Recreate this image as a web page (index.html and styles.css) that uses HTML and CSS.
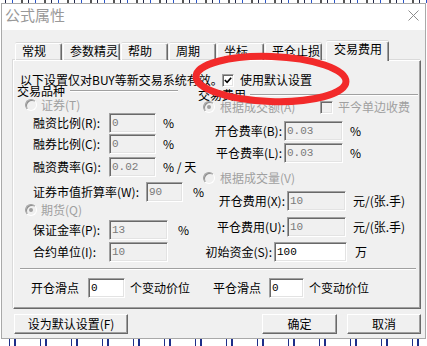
FILE: index.html
```html
<!DOCTYPE html>
<html lang="zh-CN">
<head>
    <meta charset="UTF-8">
    <title>公式属性</title>
    <link rel="stylesheet" href="styles.css">
</head>
<body>
    <div class="backdrop-top"></div>

    <div class="dialog">
        <div class="titlebar">
            <span class="title">公式属性</span>
            <svg class="close" width="11" height="11" viewBox="0 0 11 11">
                <path d="M0.5 0.5L10.5 10.5M10.5 0.5L0.5 10.5" stroke="#8c8c8c" stroke-width="1" fill="none"/>
            </svg>
        </div>

        <div class="dialog-body">
            <div class="tabs">
                <div class="tab">常规</div>
                <div class="tab wide">参数精灵</div>
                <div class="tab">帮助</div>
                <div class="tab">周期</div>
                <div class="tab">坐标</div>
                <div class="tab wide">平仓止损</div>
                <div class="tab active">交易费用</div>
            </div>

            <div class="panel">
                <div class="notice">
                    <span class="notice-text">以下设置仅对BUY等新交易系统有效。</span>
                    <span class="check on">
                        <svg width="11" height="11" viewBox="0 0 11 11">
                            <polyline points="2,5 4.5,7.5 9,2.5" stroke="#000" stroke-width="1.8" fill="none"/>
                        </svg>
                    </span>
                    <span class="check-text">使用默认设置</span>
                </div>

                <div class="columns">
                    <!-- 交易品种 -->
                    <div class="col col-left">
                        <div class="row short group-head"><span>交易品种</span><i class="rule"></i></div>
                        <div class="row short opt"><span class="radio"></span><span class="opt-text">证券(T)</span></div>
                        <div class="row">
                            <span class="lbl">融资比例(R):</span><span class="field">0</span><span class="unit">%</span>
                        </div>
                        <div class="row">
                            <span class="lbl">融券比例(C):</span><span class="field">0</span><span class="unit">%</span>
                        </div>
                        <div class="row">
                            <span class="lbl">融资费率(G):</span><span class="field">0.02</span><span class="unit">% / 天</span>
                        </div>
                        <div class="row">
                            <span class="lbl wide">证券市值折算率(W):</span><span class="field short">90</span><span class="unit far">%</span>
                        </div>
                        <div class="row short opt"><span class="radio checked"></span><span class="opt-text">期货(Q)</span></div>
                        <div class="row">
                            <span class="lbl">保证金率(P):</span><span class="field mid">13</span><span class="unit far">%</span>
                        </div>
                        <div class="row">
                            <span class="lbl">合约单位(I):</span><span class="field mid">10</span>
                        </div>
                    </div>

                    <!-- 交易费用 -->
                    <div class="col col-right">
                        <div class="row short group-head"><span>交易费用</span><i class="rule"></i></div>
                        <div class="row short opt">
                            <span class="radio checked"></span><span class="opt-text long">根据成交额(A)</span>
                            <span class="check"></span><span class="opt-text">平今单边收费</span>
                        </div>
                        <div class="row">
                            <span class="lbl rate">开仓费率(B):</span><span class="field mid">0.03</span><span class="unit">%</span>
                        </div>
                        <div class="row">
                            <span class="lbl rate">平仓费率(L):</span><span class="field mid">0.03</span><span class="unit">%</span>
                        </div>
                        <div class="row short opt"><span class="radio"></span><span class="opt-text">根据成交量(V)</span></div>
                        <div class="row">
                            <span class="lbl fee">开仓费用(X):</span><span class="field mid">10</span><span class="unit">元/(张.手)</span>
                        </div>
                        <div class="row">
                            <span class="lbl fee">平仓费用(U):</span><span class="field mid">10</span><span class="unit">元/(张.手)</span>
                        </div>
                        <div class="row">
                            <span class="lbl cap">初始资金(S):</span><span class="field long on">100</span><span class="unit wide">万</span>
                        </div>
                    </div>
                </div>

                <div class="sep"></div>

                <div class="slip">
                    <div class="slip-group">
                        <span class="slip-lbl">开仓滑点</span><span class="field short on">0</span><span class="slip-unit">个变动价位</span>
                    </div>
                    <div class="slip-group">
                        <span class="slip-lbl">平仓滑点</span><span class="field short on">0</span><span class="slip-unit">个变动价位</span>
                    </div>
                </div>
            </div>

            <div class="actions">
                <button class="btn default">设为默认设置(F)</button>
                <button class="btn ok">确定</button>
                <button class="btn cancel">取消</button>
            </div>
        </div>
    </div>

    <div class="backdrop-bottom"></div>

    <!-- red marker drawn over the screenshot -->
    <svg class="annot" width="427" height="346" viewBox="0 0 427 346">
        <ellipse cx="271" cy="79" rx="75" ry="22.5" transform="rotate(2 271 79)" fill="none" stroke="#f22a2a" stroke-width="7"/>
    </svg>
</body>
</html>
```

FILE: styles.css
```css
* {
    box-sizing: border-box;
}

body {
    margin: 0;
    width: 427px;
    height: 346px;
    overflow: hidden;
    position: relative;
    background: #fff;
    font-family: "Noto Sans CJK SC", "Noto Sans", sans-serif;
    font-size: 12px;
    line-height: 14px;
    color: #000;
}

/* whatever is behind the dialog */
.backdrop-top {
    height: 3px;
    background: repeating-linear-gradient(90deg, #fff 0 5px, #22284a 5px 6px, #fff 6px 12px, #2a55c8 12px 13px, #fff 13px 21px, #555 21px 23px);
}

.backdrop-bottom {
    height: 7px;
    background:
        repeating-linear-gradient(90deg, transparent 0 9px, #1d2f8a 9px 10px, transparent 10px 14px, #1d2f8a 14px 16px, transparent 16px 31px),
        linear-gradient(#fff 0 2px, transparent 2px);
    background-color: #fff;
}

/* Dialog */
.dialog {
    width: 425px;
    margin-left: 1px;
    border: 1px solid #a9a9a9;
    background: #f0f0f0;
}

.titlebar {
    height: 26px;
    background: #fff;
    display: flex;
    justify-content: space-between;
    align-items: flex-start;
    padding: 1px 6px 0 3px;
}

.title {
    font-size: 15px;
    line-height: 20px;
    color: #999;
}

.close {
    margin-top: 5px;
}

.dialog-body {
    padding: 11px 4px 4px 11px;
}

/* Tabs */
.tabs {
    display: flex;
    align-items: flex-end;
    height: 19px;
    padding-left: 2px;
}

.tab {
    width: 47px;
    height: 17px;
    margin-right: 1px;
    padding: 0 0 0 6px;
    border: 1px solid;
    border-bottom: none;
    border-color: #fff #696969 #fff #fff;
    border-radius: 2px 2px 0 0;
    box-shadow: inset -1px 0 #a0a0a0, 0 -1px 0 #dadada;
    white-space: nowrap;
}

.tab.wide {
    width: 57px;
}

.tab.active {
    width: 63px;
    height: 20px;
    margin-left: 3px;
    margin-bottom: -1px;
    padding-left: 7px;
    position: relative;
    z-index: 1;
    background: #f0f0f0;
}

.panel {
    width: 408px;
    height: 249px;
    border: 1px solid;
    border-color: #fff #696969 #696969 #fff;
    box-shadow: inset -1px -1px #a0a0a0, -1px -1px 0 #dadada;
}

.notice {
    height: 24px;
    padding-top: 14px;
    display: flex;
    align-items: center;
}

.notice-text {
    width: 208px;
    padding-left: 6px;
    white-space: nowrap;
}

.check-text {
    margin-left: 6px;
}

/* Columns */
.columns {
    display: flex;
    height: 177px;
}

.col {
    display: grid;
    align-items: end;
}

.col-left {
    width: 180px;
    grid-template-rows: 12px 14px 22px 21px 23px 25px 14px 24px 22px;
}

.col-right {
    width: 225px;
    grid-template-rows: 16px 12px 28px 22px 21px 27px 26px 25px;
}

.row {
    display: flex;
    align-items: center;
    height: 20px;
    white-space: nowrap;
}

.row.short {
    height: 12px;
    line-height: 12px;
}

.group-head .rule {
    height: 2px;
    border-top: 1px solid #a0a0a0;
    border-bottom: 1px solid #fff;
}

.col-left .group-head {
    padding-left: 3px;
}

.col-left .group-head .rule {
    width: 108px;
    margin-left: 5px;
}

.col-right .group-head {
    padding-left: 4px;
}

.col-right .group-head .rule {
    flex: 1;
    margin: 0 1px 0 4px;
}

.col-left .opt {
    padding-left: 11px;
}

.col-right .opt {
    padding-left: 9px;
}

.opt-text {
    margin-left: 4px;
    color: #a0a0a0;
}

.col-right .opt-text {
    margin-left: 5px;
}

.opt-text.long {
    width: 100px;
}

.radio {
    width: 12px;
    height: 12px;
    border-radius: 50%;
    border: 1px solid;
    border-color: #a0a0a0 #fff #fff #a0a0a0;
    box-shadow: inset 1px 1px #8d8d8d;
    background: #f0f0f0;
    display: flex;
    align-items: center;
    justify-content: center;
    flex-shrink: 0;
}

.radio.checked::after {
    content: "";
    width: 4px;
    height: 4px;
    border-radius: 50%;
    background: #a0a0a0;
}

.check {
    width: 13px;
    height: 13px;
    border: 1px solid;
    border-color: #a0a0a0 #fff #fff #a0a0a0;
    box-shadow: inset 1px 1px #696969, inset -1px -1px #e3e3e3;
    background: #f0f0f0;
    display: flex;
    flex-shrink: 0;
}

.check.on {
    background: #fff;
    width: 12px;
    height: 13px;
}

.lbl {
    width: 76px;
}

.col-left .row:not(.short) {
    padding-left: 19px;
}

.lbl.wide {
    width: 113px;
}

.col-right .lbl {
    text-align: right;
    margin-right: 2px;
}

.lbl.rate {
    width: 88px;
}

.lbl.fee {
    width: 91px;
}

.lbl.cap {
    width: 78px;
}

.field {
    width: 47px;
    height: 20px;
    border: 1px solid;
    border-color: #a0a0a0 #fff #fff #a0a0a0;
    box-shadow: inset 1px 1px #696969, inset -1px -1px #e3e3e3;
    background: #f0f0f0;
    color: #7a7a7a;
    padding: 1px 0 0 2px;
    font-family: "Liberation Mono", monospace;
    font-size: 11px;
    line-height: 16px;
    flex-shrink: 0;
}

.field.on {
    background: #fff;
    color: #000;
}

.field.short {
    width: 37px;
}

.field.mid {
    width: 59px;
}

.field.long {
    width: 73px;
}

.unit {
    margin-left: 7px;
}

.unit.far {
    margin-left: 10px;
}

.unit.wide {
    margin-left: 8px;
}

/* bottom of the tab page */
.sep {
    height: 2px;
    margin: 6px 4px 0 6px;
    border-top: 1px solid #a0a0a0;
    border-bottom: 1px solid #fff;
}

.slip {
    display: flex;
    height: 20px;
    margin-top: 8px;
}

.slip-group {
    display: flex;
    align-items: center;
    width: 199px;
    padding-left: 17px;
    white-space: nowrap;
}

.slip-group + .slip-group {
    padding-left: 0;
}

.slip-lbl {
    width: 57px;
}

.slip-group + .slip-group .slip-lbl {
    width: 56px;
}

.slip-group + .slip-group .field.short {
    width: 35px;
}

.slip-unit {
    margin-left: 5px;
}

/* Buttons */
.actions {
    display: flex;
    margin-top: 5px;
}

.btn {
    height: 20px;
    padding: 0;
    border: 1px solid;
    border-color: #fff #696969 #696969 #fff;
    box-shadow: inset -1px -1px #a0a0a0;
    background: #f0f0f0;
    font-family: inherit;
    font-size: 12px;
    line-height: 14px;
    color: #000;
}

.btn.default {
    width: 114px;
    margin-left: 1px;
}

.btn.ok {
    width: 75px;
    margin-left: auto;
}

.btn.cancel {
    width: 74px;
    margin-left: 10px;
}

.annot {
    position: absolute;
    left: 0;
    top: 0;
    pointer-events: none;
}
```
